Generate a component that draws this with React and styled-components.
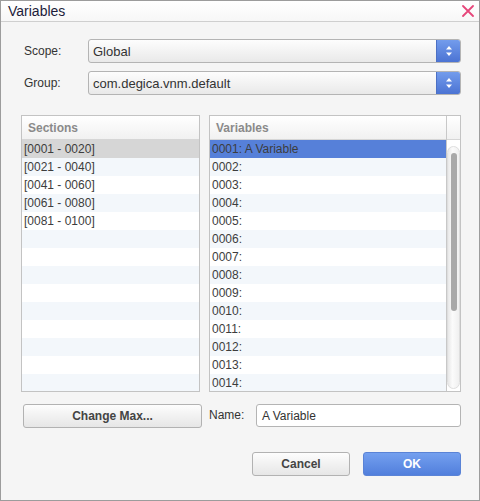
import styled, { createGlobalStyle } from "styled-components";

const GlobalStyle = createGlobalStyle`
  body {
    margin: 0;
    font-family: "Liberation Sans", Arial, sans-serif;
    background: #ffffff;
  }
`;

const Window = styled.div`
  width: 480px;
  height: 501px;
  box-sizing: border-box;
  border: 1px solid #9c9c9c;
  background: #f5f5f5;
  display: flex;
  flex-direction: column;
`;

const TitleBar = styled.div`
  height: 20px;
  border-bottom: 1px solid #cfcfcf;
  background: linear-gradient(#ffffff, #f7f7f7);
  display: flex;
  align-items: center;
  justify-content: space-between;
  padding: 0 5px 0 7px;
  font-size: 14px;
  color: #1c1c3a;
`;

const CloseButton = styled.svg`
  width: 12px;
  height: 12px;
`;

const Body = styled.div`
  flex: 1;
  display: flex;
  flex-direction: column;
  padding: 17px 18px 0 20px;
`;

const FieldRow = styled.div`
  display: flex;
  align-items: center;
  height: 24px;
  margin-bottom: 8px;
`;

const Label = styled.div`
  width: ${(p) => p.$width || 67}px;
  padding-left: ${(p) => p.$indent || 0}px;
  box-sizing: border-box;
  font-size: 12px;
  color: #333;
  margin-top: ${(p) => p.$offset || 0}px;
`;

const Select = styled.div`
  flex: 1;
  height: 24px;
  box-sizing: border-box;
  border: 1px solid #b4b4b4;
  border-radius: 3px;
  background: linear-gradient(#fdfdfd, #e9e9e9);
  display: flex;
  align-items: center;
  overflow: hidden;
`;

const SelectValue = styled.div`
  flex: 1;
  padding-left: 4px;
  font-size: 13px;
  color: #333;
`;

const SelectArrow = styled.div`
  width: 23px;
  height: 100%;
  background: linear-gradient(#739cec, #4b73d3);
  border-left: 1px solid #4c70c4;
  display: flex;
  align-items: center;
  justify-content: center;
`;

const Panels = styled.div`
  display: flex;
  gap: 9px;
  margin-top: 12px;
  height: 277px;
`;

const Panel = styled.div`
  width: ${(p) => (p.$grow ? "auto" : "179px")};
  flex: ${(p) => (p.$grow ? 1 : "none")};
  box-sizing: border-box;
  border: 1px solid #c3c3c3;
  background: #ffffff;
  display: flex;
  overflow: hidden;
`;

const ListColumn = styled.div`
  flex: 1;
  display: flex;
  flex-direction: column;
  overflow: hidden;
`;

const Header = styled.div`
  height: 23px;
  flex: none;
  border-bottom: 1px solid #d6d6d6;
  background: linear-gradient(#ffffff, #f1f1f1);
  display: flex;
  align-items: center;
  padding-left: 6px;
  font-size: 12px;
  font-weight: bold;
  color: #8a8a8a;
`;

const Row = styled.div`
  height: 18px;
  flex: none;
  display: flex;
  align-items: center;
  padding-left: 2px;
  font-size: 12px;
  color: #3d3d3d;
  background: ${(p) =>
    p.$selected ? p.$selected : p.$odd ? "#f3f7fb" : "#ffffff"};
`;

const ScrollColumn = styled.div`
  width: 13px;
  flex: none;
  border-left: 1px solid #c8c8c8;
  display: flex;
  flex-direction: column;
`;

const ScrollHead = styled.div`
  height: 23px;
  border-bottom: 1px solid #d6d6d6;
  background: linear-gradient(#ffffff, #f1f1f1);
`;

const ScrollTrack = styled.div`
  flex: 1;
  margin: 6px 0 2px 0;
  border-radius: 7px;
  background: linear-gradient(90deg, #e8e8e8, #fbfbfb 40%, #f0f0f0);
  border: 1px solid #dedede;
  display: flex;
  flex-direction: column;
  align-items: center;
  padding-top: 6px;
`;

const ScrollThumb = styled.div`
  width: 6px;
  height: 158px;
  border-radius: 3px;
  background: #a9a9a9;
`;

const BottomRow = styled.div`
  display: flex;
  align-items: flex-start;
  margin-top: 12px;
`;

const Button = styled.button`
  height: 24px;
  width: ${(p) => p.$width}px;
  margin-left: ${(p) => p.$ml || 0}px;
  box-sizing: border-box;
  border: 1px solid ${(p) => (p.$primary ? "#5a83d6" : "#b2b2b2")};
  border-radius: 3px;
  background: ${(p) =>
    p.$primary
      ? "linear-gradient(#74a0ef, #517fdc)"
      : "linear-gradient(#fdfdfd, #e6e6e6)"};
  color: ${(p) => (p.$primary ? "#ffffff" : "#444")};
  font-family: "Liberation Sans", Arial, sans-serif;
  font-size: 12px;
  font-weight: bold;
  padding: 0;
`;

const TextInput = styled.div`
  flex: 1;
  height: 23px;
  box-sizing: border-box;
  border: 1px solid #b4b4b4;
  border-radius: 3px;
  background: #ffffff;
  display: flex;
  align-items: center;
  padding-left: 5px;
  font-size: 12px;
  color: #333;
`;

const Actions = styled.div`
  display: flex;
  justify-content: flex-end;
  gap: 13px;
  margin-top: 24px;
`;

const sections = [
  "[0001 - 0020]",
  "[0021 - 0040]",
  "[0041 - 0060]",
  "[0061 - 0080]",
  "[0081 - 0100]",
];

function Arrows() {
  return (
    <svg width="8" height="12" viewBox="0 0 8 12">
      <path d="M4 1 L7 4.5 H1 Z" fill="#fff" />
      <path d="M4 11 L7 7.5 H1 Z" fill="#fff" />
    </svg>
  );
}

export default function App() {
  const sectionRows = Array.from({ length: 14 }, (_, i) => sections[i] || "");
  const variableRows = Array.from(
    { length: 14 },
    (_, i) => `${String(i + 1).padStart(4, "0")}:${i === 0 ? " A Variable" : ""}`
  );

  return (
    <>
      <GlobalStyle />
      <Window>
        <TitleBar>
          <span>Variables</span>
          <CloseButton viewBox="0 0 12 12">
            <path
              d="M1 1 L11 11 M11 1 L1 11"
              stroke="#e6467a"
              strokeWidth="1.8"
              strokeLinecap="round"
            />
          </CloseButton>
        </TitleBar>
        <Body>
          <FieldRow>
            <Label $indent={3}>Scope:</Label>
            <Select>
              <SelectValue>Global</SelectValue>
              <SelectArrow>
                <Arrows />
              </SelectArrow>
            </Select>
          </FieldRow>
          <FieldRow>
            <Label $indent={3}>Group:</Label>
            <Select>
              <SelectValue>com.degica.vnm.default</SelectValue>
              <SelectArrow>
                <Arrows />
              </SelectArrow>
            </Select>
          </FieldRow>
          <Panels>
            <Panel>
              <ListColumn>
                <Header>Sections</Header>
                {sectionRows.map((s, i) => (
                  <Row key={i} $odd={i % 2 === 1} $selected={i === 0 ? "#d6d6d6" : null}>
                    {s}
                  </Row>
                ))}
              </ListColumn>
            </Panel>
            <Panel $grow>
              <ListColumn>
                <Header>Variables</Header>
                {variableRows.map((v, i) => (
                  <Row key={i} $odd={i % 2 === 1} $selected={i === 0 ? "#5680d9" : null}>
                    {v}
                  </Row>
                ))}
              </ListColumn>
              <ScrollColumn>
                <ScrollHead />
                <ScrollTrack>
                  <ScrollThumb />
                </ScrollTrack>
              </ScrollColumn>
            </Panel>
          </Panels>
          <BottomRow>
            <Button $width={179} $ml={2}>
              Change Max...
            </Button>
            <Label $width={54} $indent={7} $offset={4}>
              Name:
            </Label>
            <TextInput>A Variable</TextInput>
          </BottomRow>
          <Actions>
            <Button $width={98}>Cancel</Button>
            <Button $width={98} $primary>
              OK
            </Button>
          </Actions>
        </Body>
      </Window>
    </>
  );
}
